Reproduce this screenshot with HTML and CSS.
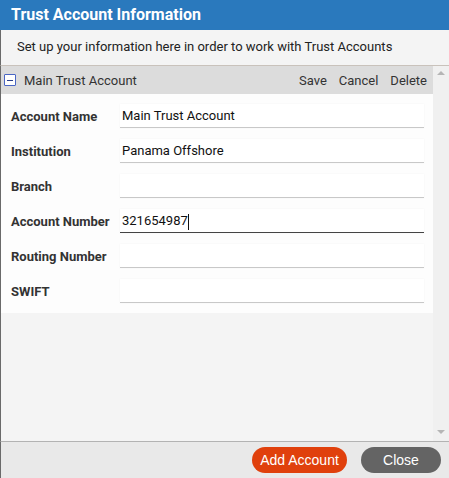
FILE: index.html
```html
<!DOCTYPE html>
<html lang="en">
<head>
    <meta charset="UTF-8">
    <meta name="viewport" content="width=device-width, initial-scale=1.0">
    <title>Trust Account Information</title>
    <link rel="stylesheet" href="styles.css">
</head>
<body>
    <div class="dialog">
        <div class="dialog-title">Trust Account Information</div>
        <div class="dialog-intro">Set up your information here in order to work with Trust Accounts</div>

        <div class="scroll-area">
            <div class="accounts">
                <div class="panel">
                    <div class="panel-head">
                        <span class="toggle"></span>
                        <span class="panel-name">Main Trust Account</span>
                        <span class="actions">
                            <a>Save</a>
                            <a>Cancel</a>
                            <a>Delete</a>
                        </span>
                    </div>
                    <form class="panel-body">
                        <div class="row">
                            <label for="accountName">Account Name</label>
                            <input type="text" id="accountName" value="Main Trust Account">
                        </div>
                        <div class="row">
                            <label for="institution">Institution</label>
                            <input type="text" id="institution" value="Panama Offshore">
                        </div>
                        <div class="row">
                            <label for="branch">Branch</label>
                            <input type="text" id="branch" value="">
                        </div>
                        <div class="row">
                            <label for="accountNumber">Account Number</label>
                            <div class="field focused">
                                <input type="text" id="accountNumber" value="321654987">
                                <span class="caret"></span>
                            </div>
                        </div>
                        <div class="row">
                            <label for="routingNumber">Routing Number</label>
                            <input type="text" id="routingNumber" value="">
                        </div>
                        <div class="row">
                            <label for="swift">SWIFT</label>
                            <input type="text" id="swift" value="">
                        </div>
                    </form>
                </div>
            </div>
            <div class="scrollbar">
                <span class="arrow up"></span>
                <span class="arrow down"></span>
            </div>
        </div>

        <div class="dialog-footer">
            <button class="btn btn-add">Add Account</button>
            <button class="btn btn-close">Close</button>
        </div>
    </div>
</body>
</html>
```

FILE: styles.css
```css
body {
    margin: 0;
    font-family: Roboto, "Liberation Sans", Arial, sans-serif;
    font-size: 13px;
    color: #222;
    background-color: #fff;
    overflow: hidden;
}
.dialog {
    width: 449px;
    height: 478px;
    display: flex;
    flex-direction: column;
}
.dialog-title {
    height: 30px;
    line-height: 29px;
    padding-left: 11px;
    background-color: #2a79bd;
    color: #fff;
    font-size: 16px;
    font-weight: bold;
}
.dialog-intro {
    height: 35px;
    line-height: 34px;
    padding-left: 16px;
    background-color: #f4f4f4;
    border-left: 1px solid #6a6a6a;
    border-bottom: 1px solid #c9c2bb;
    color: #222;
}
.scroll-area {
    height: 375px;
    display: flex;
    background-color: #f4f4f4;
    border-left: 1px solid #6a6a6a;
}
.accounts {
    flex: 1;
}
.panel-head {
    height: 28px;
    display: flex;
    align-items: center;
    background-color: #dcdcdc;
    padding: 0 6px 0 3px;
    color: #333;
}
.toggle {
    width: 10px;
    height: 10px;
    border: 1px solid #4a66c4;
    border-radius: 1px;
    background-color: #fff;
    display: flex;
    align-items: center;
    justify-content: center;
    margin-right: 8px;
}
.toggle::before {
    content: "";
    width: 6px;
    height: 1px;
    background-color: #2a3f8c;
}
.panel-name {
    flex: 1;
}
.actions {
    display: flex;
    gap: 12px;
}
.panel-body {
    margin: 0;
    padding: 10px 0 10px 10px;
    background-color: #fdfdfd;
    display: flex;
    flex-direction: column;
    gap: 11px;
}
.row {
    display: flex;
    align-items: center;
}
.row label {
    width: 109px;
    font-weight: bold;
    color: #333;
}
.row input {
    width: 304px;
    height: 24px;
    box-sizing: border-box;
    padding: 0 2px;
    border: none;
    border-bottom: 1px solid #c8c8c8;
    background-color: #fff;
    box-shadow: 0 0 2px rgba(0, 0, 0, 0.04);
    font-family: Roboto, "Liberation Sans", Arial, sans-serif;
    font-size: 13px;
    color: #111;
    outline: none;
}
.field {
    position: relative;
}
.field.focused input {
    border-bottom-color: #444;
}
.caret {
    position: absolute;
    left: 68px;
    top: 5px;
    width: 1px;
    height: 16px;
    background-color: #111;
}
.scrollbar {
    width: 16px;
    background-color: #f0f0f0;
    display: flex;
    flex-direction: column;
    justify-content: space-between;
    align-items: center;
    padding: 5px 0 7px;
}
.arrow {
    width: 0;
    height: 0;
    border-left: 4px solid transparent;
    border-right: 4px solid transparent;
}
.arrow.up {
    border-bottom: 4px solid #b5b5b5;
}
.arrow.down {
    border-top: 4px solid #b5b5b5;
}
.dialog-footer {
    height: 36px;
    display: flex;
    justify-content: flex-end;
    align-items: center;
    gap: 14px;
    padding-right: 8px;
    background-color: #e9e9e9;
    border-top: 1px solid #b3b3b3;
    border-left: 1px solid #6a6a6a;
}
.btn {
    height: 26px;
    border: none;
    border-radius: 13px;
    color: #fff;
    font-family: Arial, "Liberation Sans", sans-serif;
    font-size: 14px;
    padding: 0;
    cursor: pointer;
}
.btn-add {
    width: 95px;
    background-color: #e0400c;
}
.btn-close {
    width: 80px;
    background-color: #646464;
}
```
